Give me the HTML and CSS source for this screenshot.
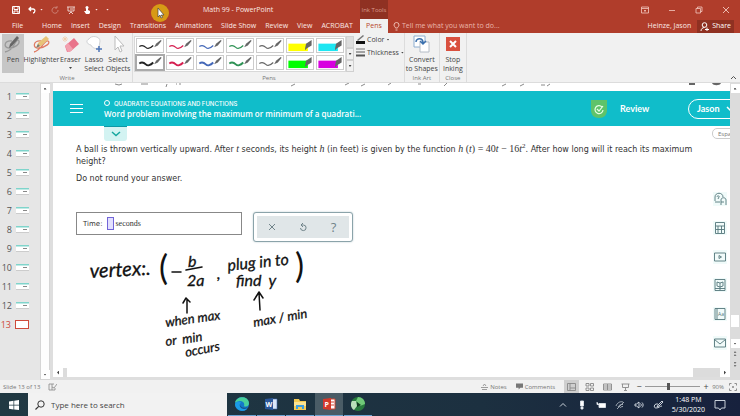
FILE: index.html
```html
<!DOCTYPE html>
<html lang="en">
<head>
<meta charset="utf-8">
<title>Math 99 - PowerPoint</title>
<link rel="stylesheet" href="styles.css">
</head>
<body>
<svg class="defs" aria-hidden="true">
  <symbol id="nib" viewBox="0 0 27 14"><path d="M2 8C5 6 7 7 9 9S14 10 17 7" fill="none" stroke="currentColor"/><path d="M18 9l2-4 5-4 1 1-4 5z" fill="#666" stroke="none"/></symbol>
  <symbol id="marker" viewBox="0 0 27 14"><path d="M1 5h21v8H1z" fill="currentColor"/><path d="M19 10l1-5 6-4v6l-5 3-2 2z" fill="#666"/></symbol>
</svg>

<header class="titlebar">
  <div class="title-left">
    <div class="title-row">
      <div class="quick">
        <button aria-label="Save"><svg viewBox="0 0 8 8"><path d="M.5.5h7v7h-7zM2 .5v3h4v-3M2 7.500v-2.500h4v2.500" fill="none" stroke="#fff"/></svg></button>
        <button aria-label="Undo"><svg viewBox="0 0 8 8"><path d="M3 1L1 3l2 2M1 3h4c3 0 2 4 0 4" fill="none" stroke="#fff" stroke-width="1.300"/></svg></button>
        <i class="caret"></i>
        <button aria-label="Redo" class="dim"><svg viewBox="0 0 8 8"><path d="M6 2a3 3 0 1 0 1 2M6 0v2H4" fill="none" stroke="#fff"/></svg></button>
        <button aria-label="Start slide show" class="soft"><svg viewBox="0 0 8 8"><path d="M0 1h8M1 1v4h6V1M4 5v1M2 8l2-2 2 2M3 3h3" fill="none" stroke="#fff"/></svg></button>
        <button aria-label="Touch mode"><svg viewBox="0 0 8 8"><circle cx="4" cy="1.500" r="1.500" fill="#fff"/><path d="M3 2h2v2l2 1v2L6 8H3L1 5h2z" fill="#fff"/></svg></button>
        <i class="caret"></i>
        <i class="caret last"></i>
      </div>
      <span class="pointer"><svg viewBox="0 0 18 18"><circle cx="9" cy="9" r="9" fill="#d79a16"/><path d="M7 4v9l2-2 1 3 1.500-.6L10.300 11H13z" fill="#fff" stroke="#444" stroke-width=".7"/></svg></span>
      <h1>Math 99 - PowerPoint</h1>
    </div>
    <nav class="tabs" aria-label="Ribbon tabs">
      <a href="#file" class="file">File</a><a href="#home">Home</a><a href="#insert">Insert</a><a href="#design">Design</a><a href="#transitions">Transitions</a><a href="#animations">Animations</a><a href="#show">Slide Show</a><a href="#review">Review</a><a href="#view">View</a><a href="#acrobat">ACROBAT</a>
    </nav>
  </div>
  <div class="context"><span>Ink Tools</span><a href="#pens">Pens</a></div>
  <div class="title-right">
    <div class="window-buttons">
      <button aria-label="Ribbon display options"><svg viewBox="0 0 8 8"><path d="M.5 1h7v6h-7zM.5 2.500h7M4 6V4M3 5l1-1 1 1" fill="none" stroke="#f3c9c0" stroke-width=".8"/></svg></button>
      <button aria-label="Minimize"><svg viewBox="0 0 8 8"><path d="M1 4.500h6" stroke="#f3c9c0" stroke-width=".8"/></svg></button>
      <button aria-label="Restore"><svg viewBox="0 0 8 8"><path d="M1 2.500h4.500V7H1zM2.500 2.500V1H7v4.500H5.500" fill="none" stroke="#f3c9c0" stroke-width=".8"/></svg></button>
      <button aria-label="Close"><svg viewBox="0 0 8 8"><path d="M1 1l6 6M7 1L1 7" stroke="#f3c9c0" stroke-width=".9"/></svg></button>
    </div>
    <div class="tell-row">
      <svg class="bulb" viewBox="0 0 7 9"><path d="M2.500 6C2.500 5 1 4.500 1 3a2.500 2.500 0 0 1 5 0c0 1.500-1.500 2-1.500 3zM2.500 8h2" fill="none" stroke="#f3c9c0" stroke-width=".9"/></svg>
      <button class="tell">Tell me what you want to do...</button>
      <span class="user">Heinze, Jason</span>
      <button class="share"><svg viewBox="0 0 9 9"><circle cx="4.500" cy="3" r="2.300" fill="none" stroke="#fff"/><path d="M1 9c0-2 1.500-3.500 3.500-3.500M5 7.500h4M7 5.500v4" fill="none" stroke="#fff"/></svg>Share</button>
    </div>
  </div>
</header>

<section class="ribbon" aria-label="Pens">
  <div class="group write">
    <div class="tools">
      <button class="tool on"><svg viewBox="0 0 18 18"><path d="M8 6C0 5-1 13 5 13s11-4 10-7c-1-2-3 0-5 4s-5 6-9 7" fill="none" stroke="#999" stroke-width="1.300"/><path d="M5 13l1-4 7-8 2 2-7 8z" fill="#666"/></svg>Pen</button>
      <button class="tool wide"><svg viewBox="0 0 18 18"><path d="M8 6C0 5-1 14 6 13S18 8 15 6s-7 10-14 11" fill="none" stroke="#e07a62" stroke-width="1.300"/><path d="M3 13l2-5 8-7 3 3-8 7z" fill="#e8c277"/><path d="M3 13l2-4 2 2z" fill="#777"/></svg>Highlighter</button>
      <button class="tool"><svg viewBox="0 0 18 18"><path d="M3 11l9-8 5 6-8 7-4 1z" fill="#e9748b"/><path d="M3 11l3-3 5 6-3 3H6z" fill="#f2a0ae"/><path d="M3 1v6M0 4h6M1 2l4 4M5 2L1 6" stroke="#f1c5a0" stroke-width=".7"/></svg>Eraser<i class="caret"></i></button>
      <button class="tool lasso"><svg viewBox="0 0 18 18"><path d="M4 4c2-4 11-3 11 2l-1 6c-2 3-7 1-8-2-5-1-5-5-2-6z" fill="#fff" stroke="#c5c8cc" stroke-width=".8"/><path d="M14 11v6M11 14h6" stroke="#4d76b8" stroke-width="1.500"/></svg>Lasso<br>Select</button>
      <button class="tool"><svg viewBox="0 0 18 18"><path d="M6 1v14l3-3 2 5 2-1-2-5h4z" fill="#fff" stroke="#bbb"/></svg>Select<br>Objects</button>
    </div>
    <span class="group-name">Write</span>
  </div>
  <div class="group pens">
    <div class="tools">
      <div class="gallery">
        <button class="c-black" aria-label="Black pen"><svg><use href="#nib"/></svg></button>
        <button class="c-red" aria-label="Red pen"><svg><use href="#nib"/></svg></button>
        <button class="c-blue" aria-label="Blue pen"><svg><use href="#nib"/></svg></button>
        <button class="c-green" aria-label="Green pen"><svg><use href="#nib"/></svg></button>
        <button class="c-grey" aria-label="Grey pen"><svg><use href="#nib"/></svg></button>
        <button class="c-yellow" aria-label="Yellow highlighter"><svg><use href="#marker"/></svg></button>
        <button class="c-cyan" aria-label="Cyan highlighter"><svg><use href="#marker"/></svg></button>
        <button class="c-black bold on" aria-label="Thick black pen"><svg><use href="#nib"/></svg></button>
        <button class="c-red bold" aria-label="Thick red pen"><svg><use href="#nib"/></svg></button>
        <button class="c-blue bold" aria-label="Thick blue pen"><svg><use href="#nib"/></svg></button>
        <button class="c-green bold" aria-label="Thick green pen"><svg><use href="#nib"/></svg></button>
        <button class="c-grey" aria-label="Thick grey pen"><svg><use href="#nib"/></svg></button>
        <button class="c-lime" aria-label="Green highlighter"><svg><use href="#marker"/></svg></button>
        <button class="c-magenta" aria-label="Magenta highlighter"><svg><use href="#marker"/></svg></button>
      </div>
      <div class="gallery-scroll"><button aria-label="Previous pens" class="off"></button><button aria-label="Next pens"><i class="caret"></i></button><button aria-label="More pens"><i class="caret"></i></button></div>
      <div class="options">
        <button><svg viewBox="0 0 9 9"><path d="M0 6h9v3H0z" fill="#111"/><path d="M1 5l6-5 1 1-6 5z" fill="#777"/></svg>Color<i class="caret"></i></button>
        <button><svg viewBox="0 0 9 9"><path d="M0 1h9" stroke="#555" stroke-width=".8"/><path d="M0 4h9" stroke="#555"/><path d="M0 7.500h9" stroke="#555" stroke-width="2"/></svg>Thickness<i class="caret"></i></button>
      </div>
    </div>
    <span class="group-name">Pens</span>
  </div>
  <div class="group art">
    <div class="tools"><button class="tool"><svg viewBox="0 0 18 18"><path d="M1 1h11v11H1z" fill="#fff" stroke="#8eaed0"/><path d="M7 7h9v10H7z" fill="#fff" stroke="#b4bcc6"/><path d="M3 7c0-4 7-5 7 1M7 6l3 3 3-3" fill="none" stroke="#3b70ae" stroke-width="1.500"/></svg>Convert<br>to Shapes</button></div>
    <span class="group-name">Ink Art</span>
  </div>
  <div class="group stop">
    <div class="tools"><button class="tool"><svg viewBox="0 0 18 18"><path d="M2 2h14v14H2z" fill="#d9503f"/><path d="M6 6l6 6M12 6l-6 6" stroke="#fff" stroke-width="2"/></svg>Stop<br>Inking</button></div>
    <span class="group-name">Close</span>
  </div>
  <button class="collapse" aria-label="Collapse the ribbon"><svg viewBox="0 0 7 5"><path d="M1 4l2.500-2.500L6 4" fill="none" stroke="#555"/></svg></button>
</section>

<main class="workspace">
  <ol class="slides">
    <li>1<i></i></li><li>2<i></i></li><li>3<i></i></li><li>4<i></i></li><li>5<i></i></li><li>6<i></i></li><li>7<i></i></li><li>8<i></i></li><li>9<i></i></li><li>10<i></i></li><li>11<i></i></li><li>12<i></i></li><li class="on">13<i></i></li>
  </ol>
  <div class="scroll left"><button aria-label="Scroll slides up"><i class="caret up"></i></button><button aria-label="Scroll slides down"><i class="caret"></i></button></div>

  <div class="stage">
    <article class="slide">
      <div class="cut"><svg viewBox="0 0 677 8"><path d="M62 1l4 1 3-1M88 1h7M114 1l-1 3M123 1h1M126 1h2M238 3l4-2M292 2l4-2M308 3l4-2M335 2l3-2M365 1h3M391 3l3-3M449 3l4-2M467 3l4-2M488 2h4M494 3l3-2" fill="none" stroke="#8a8a8a"/><path d="M659 0h9c-1 3-8 3-9 0zM636 0h6v2h-6z" fill="#666"/></svg></div>
      <header class="course">
        <button class="menu" aria-label="Menu"><i></i><i></i><i></i></button>
        <div class="heading"><p><i></i>QUADRATIC EQUATIONS AND FUNCTIONS</p><h2>Word problem involving the maximum or minimum of a quadrati...</h2></div>
        <svg class="badge" viewBox="0 0 16 18"><path d="M0 0h16v10c0 5-3 8-8 8s-8-3-8-8z" fill="#5fc36a"/><path d="M11 7a4 4 0 1 0 1 3M6 9l2 2 4-5" fill="none" stroke="#e6ffe6" stroke-width="1.200"/></svg>
        <a class="review" href="#review-page">Review</a>
        <button class="account">Jason<svg viewBox="0 0 8 6"><path d="M1 1l3 3 3-3" fill="none" stroke="#fff" stroke-width="1.500"/></svg></button>
      </header>
      <div class="page">
        <div class="problem">
          <button class="expand" aria-label="Show more"><svg viewBox="0 0 10 6"><path d="M1 1l4 3.500L9 1" fill="none" stroke="#16a79f" stroke-width="1.500"/></svg></button>
          <p>A ball is thrown vertically upward. After <var>t</var> seconds, its height <var>h</var> (in feet) is given by the function <span class="math"><var>h</var> (<var>t</var>) = 40<var>t</var> − 16<var>t</var><sup>2</sup></span>. After how long will it reach its maximum height?</p>
          <p>Do not round your answer.</p>
          <div class="answer-row">
            <div class="answer"><label for="time">Time:</label><input id="time" type="text"><span>seconds</span></div>
            <div class="keys">
              <button aria-label="Clear"><svg viewBox="0 0 10 10"><path d="M2 2l6 6M8 2L2 8" stroke="#71848a"/></svg></button>
              <button aria-label="Undo answer"><svg viewBox="0 0 10 10"><path d="M5 1L3 3l2 2M3 3h2.500a2.800 2.800 0 1 1-3 3" fill="none" stroke="#71848a"/></svg></button>
              <button aria-label="Help">?</button>
            </div>
          </div>
          <svg class="ink" viewBox="60 245 300 120">
            <g class="hand">
              <text x="90" y="280" class="xlarge" transform="rotate(-3 90 280)">vertex:.</text>
              <text x="159" y="282" class="bracket">(</text>
              <text x="188" y="269" class="large">b</text>
              <text x="187" y="288" class="large">2a</text>
              <text x="217" y="281" class="large">,</text>
              <text x="228" y="273" class="large" transform="rotate(-6 228 273)">plug in to</text>
              <text x="236" y="288" class="large">find&#160; y</text>
              <text x="295" y="280" class="bracket">)</text>
              <text x="166" y="329" transform="rotate(-8 166 329)">when max</text>
              <text x="166" y="348" transform="rotate(-8 166 348)">or &#160;min</text>
              <text x="186" y="359" transform="rotate(-11 186 359)">occurs</text>
              <text x="254" y="329" transform="rotate(-10 254 329)">max / min</text>
            </g>
            <path class="strokes" d="M172 274h9M186 272l16-3M187 315v-14M183 305l3-5 4 4M260 312l-1-17M254 302l5-8 4 6"/>
          </svg>
        </div>
        <aside class="rail">
          <button class="lang">Español</button>
          <div class="rail-icons">
            <button aria-label="Ask"><svg viewBox="0 0 14 14"><path d="M2 9V5c0-5 8-5 8 0M2 10h5M4 5c0-2 3-1 2 0L5 7M8 13V8c0-3 5-3 5 0v5M8 10h3"/></svg></button>
            <button aria-label="Calculator"><svg viewBox="0 0 14 14"><path d="M2.500 1.500h9v11h-9zM2.500 5h9M5 5v7M8.500 5v7M3 8.500h8"/></svg></button>
            <button aria-label="Video"><svg viewBox="0 0 14 14"><path d="M1.500 3h11v8h-11zM6 5.500v3L8.500 7z"/></svg></button>
            <button aria-label="Textbook"><svg viewBox="0 0 14 14"><path d="M2 1.500h10v11H2zM4 4l3 1 3-1v4L7 9 4 8zM7 5v7M2 10.500h10"/></svg></button>
            <button aria-label="Dictionary"><svg viewBox="0 0 14 14"><path d="M2 1.500h10v11H2zM4 1.500v11"/><text x="5" y="9">Aa</text></svg></button>
            <button aria-label="Message"><svg viewBox="0 0 14 14"><path d="M1.500 3h11v8h-11zM1.500 3.500L7 8l5.500-4.500"/></svg></button>
          </div>
        </aside>
      </div>
    </article>
    <div class="hscroll"><button aria-label="Scroll left"><i class="caret back"></i></button><span></span><button aria-label="Scroll right"><i class="caret next"></i></button></div>
  </div>
  <div class="scroll right"><button aria-label="Scroll up"><i class="caret up"></i></button><span class="thumb"></span><button aria-label="Scroll down"><i class="caret"></i></button><button class="bare" aria-label="Previous slide"><i class="caret up"></i><i class="caret up"></i></button><button class="bare" aria-label="Next slide"><i class="caret"></i><i class="caret"></i></button></div>
</main>

<footer class="status">
  <span>Slide 13 of 13</span>
  <svg class="spell" viewBox="0 0 9 8"><path d="M1 1h3v6H1zM4 1h2M4 7h3V5M4 4l2 1 3-4" fill="none" stroke="#888" stroke-width=".8"/></svg>
  <button class="notes"><svg viewBox="0 0 7 7"><path d="M0 4.500h7M1 6.500h5M2 3l1.500-2L5 3" fill="none" stroke="#888" stroke-width=".8"/></svg>Notes</button>
  <button class="comments"><svg viewBox="0 0 8 7"><path d="M0 0h8v5H5L3 7V5H0z" fill="#777"/></svg>Comments</button>
  <div class="views">
    <button class="on" aria-label="Normal"><svg viewBox="0 0 9 8"><path d="M.5.500h8v7h-8zM3 .5v7M3 5h5.500"/></svg></button>
    <button aria-label="Slide sorter"><svg viewBox="0 0 9 8"><path d="M1 .5h3v2.500H1zM5.500.500h3v2.500h-3zM1 5h3v2.500H1zM5.500 5h3v2.500h-3z"/></svg></button>
    <button aria-label="Reading view"><svg viewBox="0 0 9 8"><path d="M.5 1h8v6h-8zM4.500 1v6M1 3h7M1 5h7"/></svg></button>
    <button aria-label="Slide show"><svg viewBox="0 0 9 8"><path d="M.5 1h8M1.500 1v3.500h6V1M4.500 4.500V7M3 7.500h3"/></svg></button>
  </div>
  <div class="zoom"><button aria-label="Zoom out">−</button><input type="range" min="10" max="200" value="90" aria-label="Zoom"><button aria-label="Zoom in">+</button><span>90%</span></div>
  <button class="fit" aria-label="Fit to window"><svg viewBox="0 0 8 8"><path d="M.5 2.500v-2h2M5.500.500h2v2M7.500 5.500v2h-2M2.500 7.500h-2v-2M3 4h2M4 3v2" fill="none" stroke="#777" stroke-width=".8"/></svg></button>
</footer>

<nav class="taskbar" aria-label="Taskbar">
  <button class="start" aria-label="Start"><svg viewBox="0 0 10 10"><path d="M0 1.500l4.500-.7v4H0zM5.200.7L10 0v4.800H5.200zM0 5.500h4.500v4L0 8.800zM5.200 5.500H10V10l-4.800-.6z" fill="#fff"/></svg></button>
  <label class="search"><svg viewBox="0 0 10 10"><circle cx="6" cy="4" r="3.200" fill="none" stroke="#333"/><path d="M3.700 6.300L.5 9.500" stroke="#333" stroke-width="1.200"/></svg><input type="search" placeholder="Type here to search" aria-label="Type here to search"></label>
  <div class="apps">
    <button aria-label="Edge"><svg viewBox="0 0 14 14"><circle cx="7" cy="7" r="7" fill="#1479c9"/><path d="M0 6C1-1 13-2 14 6c0 4-4 4-5 3 1-3-1-5-4-5-2 0-4 1-5 2z" fill="#48cf9c"/><path d="M0 7c1-3 4-3 6-2-2 2-1 6 6 7-4 4-12 1-12-5z" fill="#1b9be6"/><path d="M5 7c0 3 4 5 8 3 0 0-2 2-4 2-3 0-5-3-4-5z" fill="#174f8c"/></svg></button>
    <button aria-label="Word"><svg viewBox="0 0 14 14"><path d="M7 2h6v10H7z" fill="#dbe6f7" stroke="#3d68b2" stroke-width=".6"/><path d="M1 2l8-1v12l-8-1z" fill="#2b579a"/><text x="1.500" y="9.500">W</text></svg></button>
    <button aria-label="File Explorer"><svg viewBox="0 0 14 14"><path d="M1 2h5l1 2h6v9H1z" fill="#f4ca52"/><path d="M1 5h12v4H1z" fill="#fbe391"/><path d="M3 12V8h8v4H9v-2H5v2z" fill="#3d9fe0"/></svg></button>
    <button class="on" aria-label="PowerPoint"><svg viewBox="0 0 14 14"><path d="M7 2h6v10H7z" fill="#fff" stroke="#cf4430"/><path d="M9 5h3M9 8h3" stroke="#cf4430"/><path d="M1 2l8-1v12l-8-1z" fill="#d5392b"/><text x="2.500" y="9.500">P</text></svg></button>
    <button aria-label="Camtasia"><svg viewBox="0 0 14 14"><circle cx="7" cy="7" r="7" fill="#287a3d"/><path d="M7 0c4 0 7 3 7 7l-5 2-4-5z" fill="#70c979"/><path d="M1 4l4 0 1 5-3 4C0 11-1 7 1 4z" fill="#b9dfb9"/><path d="M6 5l4 3-4 2z" fill="#12391f"/></svg></button>
  </div>
  <div class="tray">
    <button aria-label="Show hidden icons"><svg viewBox="0 0 10 10"><path d="M2 6.500l3-3 3 3"/></svg></button>
    <button aria-label="Microphone"><svg viewBox="0 0 10 10"><path d="M3.500 1h3v5h-3zM4 7h2v2H4z" fill="#fff"/></svg></button>
    <button aria-label="Battery"><svg viewBox="0 0 10 10"><path d="M3 3.500h6.500v4H3zM1 2v2.500h2" fill="#fff"/></svg></button>
    <button aria-label="Network" class="soft"><svg viewBox="0 0 10 10"><path d="M1 6c1-3 4-5 7-4M3 7c1-2 3-3 5-2.500M5 8c.5-1 1.500-1.500 3-1.500M2 9L9 2"/></svg></button>
    <button aria-label="Volume"><svg viewBox="0 0 10 10"><path d="M1 4h1.500L5 2v6L2.500 6H1zM6.500 3.500c1 1 1 2 0 3M8 2.500c1.500 1.500 1.500 3.500 0 5"/></svg></button>
    <button aria-label="Pen workspace"><svg viewBox="0 0 10 10"><path d="M4 7l1-2 4-4 1 1-4 4zM5 4C1 3 0 8 3 8s4-2 6-2"/></svg></button>
    <time><span>1:48 PM</span><span>5/30/2020</span></time>
    <button aria-label="Notifications" class="alerts"><svg viewBox="0 0 12 12"><path d="M1 1.500h10v7.500H7.500L6 11 4.500 9H1z"/></svg></button>
  </div>
</nav>
</body>
</html>
```
FILE: styles.css
```css
* { box-sizing: border-box; }
body {
  margin: 0;
  height: 100vh;
  display: flex;
  flex-direction: column;
  overflow: hidden;
  background: #f1f1f1;
  color: #444;
  font: 7px/10px "Open Sans", "Noto Sans", sans-serif;
}
button, input { font: inherit; color: inherit; border: 0; padding: 0; margin: 0; background: none; }
button { display: flex; align-items: center; justify-content: center; }
a { color: inherit; text-decoration: none; }
h1, h2, p, ol { margin: 0; padding: 0; font-weight: inherit; font-size: inherit; }
svg { display: block; flex: none; }
.defs { width: 0; height: 0; position: absolute; }
.caret { flex: none; width: 3px; height: 2px; background: currentColor; clip-path: polygon(0 0, 100% 0, 50% 100%); }
.caret.up { clip-path: polygon(50% 0, 100% 100%, 0 100%); }
.caret.back { width: 2px; height: 4px; clip-path: polygon(100% 0, 100% 100%, 0 50%); }
.caret.next { width: 2px; height: 4px; clip-path: polygon(0 0, 100% 50%, 0 100%); }

.titlebar { display: flex; height: 33px; flex: none; background: #b03d2b; color: #fbe9e5; }
.title-left { flex: 0 0 360px; min-width: 0; display: flex; flex-direction: column; }
.title-row { height: 19px; display: flex; align-items: center; }
.quick { display: flex; align-items: center; width: 151px; padding-left: 12px; gap: 8px; }
.quick svg { width: 8px; height: 8px; }
.quick .caret { margin-left: -4px; }
.quick .caret.last { margin-left: 0; }
.dim { opacity: .35; }
.soft { opacity: .75; }
.pointer svg { width: 18px; height: 18px; margin-top: 6px; }
h1 { margin-left: 34px; }
.tabs { display: flex; gap: 9px; padding-left: 12px; height: 14px; align-items: center; white-space: nowrap; }
.tabs .file { margin-right: 10px; }
.context { flex: none; width: 28px; display: flex; flex-direction: column; text-align: center; white-space: nowrap; }
.context span { height: 19px; line-height: 20px; background: #8f3122; color: #d99a8d; font-size: 6px; }
.context a { height: 14px; line-height: 14px; background: #f1f1f1; color: #b7472a; }
.title-right { flex: 1; display: flex; flex-direction: column; }
.window-buttons { height: 19px; display: flex; justify-content: flex-end; align-items: center; gap: 19px; padding-right: 10px; }
.window-buttons svg { width: 8px; height: 8px; }
.tell-row { height: 14px; display: flex; align-items: center; padding-right: 6px; }
.bulb { width: 7px; height: 9px; margin: 0 2px 0 5px; }
.tell { color: #eab5aa; }
.user { margin-left: auto; }
.share { background: #8f3122; margin-left: 6px; height: 13px; padding: 0 3px; gap: 3px; color: #fff; }
.share svg { width: 9px; height: 9px; }

.ribbon { display: flex; flex: none; height: 50px; border-bottom: 1px solid #dcdcdc; }
.group { display: flex; flex-direction: column; justify-content: space-between; border-right: 1px solid #dcdcdc; padding-top: 1px; }
.group-name { text-align: center; font-size: 6px; line-height: 8px; color: #777; }
.tools { display: flex; }
.tool { flex-direction: column; justify-content: flex-start; line-height: 9px; height: 39px; padding-top: 1px; white-space: nowrap; }
.tool svg { width: 18px; height: 18px; margin-bottom: 2px; }
.tool .caret { margin-top: 3px; }
.write { width: 133px; padding-left: 2px; }
.write .tool { width: 22px; }
.write .tool.wide { width: 35px; }
.write .tool.lasso { width: 24px; }
.write .tool:nth-child(3) { width: 23px; }
.write .tool:last-child { width: 24px; }
.tool.on { background: #c6c6c6; }
.pens { flex: 0 0 271px; padding-left: 1px; }
.gallery { display: grid; grid-template-columns: repeat(7, 30px); grid-auto-rows: 17px; margin-top: 2px; background: #fff; border: 1px solid #d8d8d8; }
.gallery button { border: 1px solid #ccc; margin: 1px; background: #fff; }
.gallery svg { width: 26px; height: 13px; stroke-width: 1.3; }
.gallery .on { border: 2px solid #aaa; margin: 0; }
.gallery .bold svg { stroke-width: 2; }
.c-black { color: #222; } .c-red { color: #d51f50; } .c-blue { color: #4468b8; } .c-green { color: #2f9255; } .c-grey { color: #666; }
.c-yellow { color: #ff0; } .c-cyan { color: #1ee6f2; } .c-lime { color: #0f0; } .c-magenta { color: #d800e0; }
.gallery-scroll { display: flex; flex-direction: column; margin-top: 2px; width: 8px; }
.gallery-scroll button { flex: 1; border: 1px solid #d0d0d0; }
.gallery-scroll .off { background: #ddd; }
.options { display: flex; flex-direction: column; gap: 2px; margin-left: 2px; }
.options button { gap: 2px; height: 11px; justify-content: flex-start; }
.options svg { width: 9px; height: 9px; }
.art { width: 35px; }
.stop { width: 27px; }
.art .tool, .stop .tool { width: 100%; }
.collapse { margin-left: auto; align-self: flex-end; padding: 2px 3px; }
.collapse svg { width: 7px; height: 5px; }

.workspace { flex: 1; min-height: 0; display: flex; background: #dedede; }
.slides { list-style: none; width: 40px; background: #e6e6e6; padding-top: 4px; font-size: 9px; }
.slides li { display: flex; height: 19px; align-items: center; justify-content: flex-end; gap: 4px; padding-right: 11px; color: #555; }
.slides i { width: 13px; height: 7px; background: linear-gradient(#888, #888) 7px 3px / 4px 1px no-repeat, linear-gradient(#7fd4cb 1px, #fff 2px); border-bottom: 1px solid #ccc; }
.slides .on { color: #cf4a3a; }
.slides .on i { border: 1px solid #cf4a3a; background: #fff; height: 9px; width: 14px; }
.scroll { display: flex; flex-direction: column; align-items: center; }
.scroll button { width: 9px; height: 9px; background: #fff; }
.scroll.left { width: 10px; background: #fdfdfd; border: 1px solid #d5d5d5; justify-content: space-between; margin-right: 3px; }
.scroll.right { width: 10px; padding-top: 1px; background: #dcdcdc; }
.scroll .thumb { width: 8px; height: 12px; background: #fff; margin: auto 0 12px; }
.scroll .bare { background: none; flex-direction: column; color: #777; height: 11px; gap: 1px; }
.scroll .bare:last-child { margin-bottom: 10px; }
.stage { flex: 1; min-width: 0; display: flex; flex-direction: column; }
.slide { flex: 1; min-height: 0; overflow: hidden; background: #fff; display: flex; flex-direction: column; color: #333; }
.cut { height: 8px; flex: none; overflow: hidden; }
.cut svg { width: 100%; height: 8px; }
.course { flex: none; height: 35px; background: #10bdca; color: #fff; display: flex; align-items: center; padding-left: 17px; white-space: nowrap; overflow: hidden; }
.menu { width: 13px; flex: none; flex-direction: column; gap: 3px; }
.menu i { width: 13px; height: 1px; background: #fff; }
.heading { margin-left: 21px; flex: 1; }
.heading p { display: flex; align-items: center; gap: 4px; font: 500 6px/9px Inter, sans-serif; }
.heading p i { width: 6px; height: 6px; border: 1px solid #fff; border-radius: 50%; }
.heading h2 { font: 600 8px/11px "Open Sans", sans-serif; }
.badge { width: 16px; height: 18px; }
.review { font: bold 9px/11px Lato, sans-serif; margin-left: 13px; width: 68px; }
.account { flex: none; width: 54px; height: 20px; margin-right: -12px; border: 1px solid #fff; border-radius: 10px; font: bold 9px/11px Lato, sans-serif; gap: 7px; justify-content: flex-start; padding-left: 8px; }
.account svg { width: 8px; height: 6px; }
.page { flex: 1; min-height: 0; display: flex; }
.problem { flex: 1; min-width: 0; padding-left: 23px; font: 8px/12px "DejaVu Sans", sans-serif; }
.problem p { max-width: 620px; margin-bottom: 5px; }
.expand { margin: 0 0 3px 28px; width: 23px; height: 15px; background: #d3f3f2; border-top: 1px solid #0d98a5; border-radius: 0 0 3px 3px; }
.expand svg { width: 10px; height: 6px; }
var, .math { font: 10px/0 "Liberation Serif", serif; }
var { font-style: italic; }
sup { font-size: 7px; line-height: 0; }
.answer-row { display: flex; align-items: flex-start; gap: 11px; margin-top: 27px; }
.answer { width: 166px; height: 23px; border: 1px solid #888; display: flex; align-items: center; padding-left: 6px; font-size: 7px; }
.answer input { width: 7px; height: 13px; margin: 0 2px 0 4px; border: 1px solid #7265d8; background: #e3e0ff; }
.answer span { font-family: "Liberation Serif", serif; font-size: 8px; }
.keys { width: 100px; height: 30px; border: 1px solid #8ba3aa; border-radius: 3px; padding: 3px; background: #fff; display: flex; box-shadow: 0 0 2px #b8c8cc; }
.keys button { flex: 1; background: #e0e6e8; color: #71848a; font: 13px "Open Sans", sans-serif; }
.keys svg { width: 10px; height: 10px; }
.ink { width: 300px; height: 120px; margin: 1px 0 0 -16px; overflow: visible; }
.hand { font: italic 13px Lato, sans-serif; fill: #111; stroke: #111; stroke-width: .3; }
.hand .large { font-size: 16px; }
.hand .xlarge { font-size: 20px; }
.hand .bracket { font: 34px Lato, sans-serif; stroke: none; }
.strokes { fill: none; stroke: #111; stroke-width: 1.5; stroke-linecap: round; stroke-linejoin: round; }
.rail { flex: none; width: 24px; display: flex; flex-direction: column; overflow: hidden; }
.lang { flex: none; width: 34px; height: 11px; margin: 2px 0 0 6px; border: 1px solid #ccc; border-radius: 5px; font-size: 6px; color: #777; }
.rail-icons { flex: 1; display: flex; flex-direction: column; align-items: center; justify-content: space-between; padding: 53px 0 18px 4px; }
.rail button { flex: none; }
.rail-icons svg { width: 14px; height: 14px; background: #f1fbfa; fill: none; stroke: #54767a; stroke-width: .9; }
.rail-icons text { font: 5px "Open Sans", sans-serif; stroke: none; fill: #54767a; }
.hscroll { display: flex; height: 9px; flex: none; margin-bottom: 3px; background: #dcdcdc; }
.hscroll button { width: 10px; background: #fff; }
.hscroll span { flex: 1; background: #fff; margin: 0 27px 0 4px; }

.status { display: flex; flex: none; height: 13px; align-items: center; padding: 0 3px; background: #f1f1f1; color: #777; font-size: 6px; }
.spell { width: 9px; height: 8px; margin-left: 8px; }
.status button { gap: 2px; }
.notes { margin-left: auto; }
.notes svg, .comments svg { width: 7px; height: 7px; }
.comments { margin-left: 9px; }
.views { display: flex; margin-left: 9px; gap: 3px; align-self: stretch; }
.views button { width: 15px; }
.views .on { background: #cfcfcf; }
.views svg { width: 9px; height: 8px; fill: none; stroke: #888; stroke-width: .9; }
.zoom { display: flex; align-items: center; gap: 3px; margin-left: 3px; }
.zoom button { width: 6px; font-size: 9px; color: #444; }
.zoom input { appearance: none; width: 55px; height: 7px; background: linear-gradient(#999, #999) center / 100% 1px no-repeat; }
.zoom input::-webkit-slider-thumb { appearance: none; width: 3px; height: 7px; background: #555; }
.fit { margin-left: 5px; }
.fit svg { width: 8px; height: 8px; }

.taskbar { display: flex; flex: none; height: 23px; background: linear-gradient(90deg, #213943, #1c3040 65%, #17213d); color: #fff; }
.start { width: 28px; }
.start svg { width: 10px; height: 10px; }
.search { width: 199px; background: #f2f2f2; display: flex; align-items: center; padding-left: 7px; gap: 6px; }
.search svg { width: 10px; height: 10px; }
.search input { flex: 1; min-width: 0; font-size: 8px; color: #333; appearance: none; }
.search input::placeholder { color: #444; opacity: 1; }
.apps { display: flex; gap: 1px; margin-left: 1px; }
.apps button { width: 28px; border-bottom: 1px solid #6ca5d4; }
.apps .on { background: #4a5c66; }
.apps svg { width: 14px; height: 14px; }
.apps text { font: bold 7px "Open Sans", sans-serif; fill: #fff; }
.tray { display: flex; align-items: center; margin-left: auto; padding-right: 14px; gap: 9px; }
.tray svg { width: 10px; height: 10px; fill: none; stroke: #dde3ea; stroke-width: .9; }
.tray .alerts svg { width: 12px; height: 12px; }
time { display: flex; flex-direction: column; text-align: center; line-height: 10px; }
```
